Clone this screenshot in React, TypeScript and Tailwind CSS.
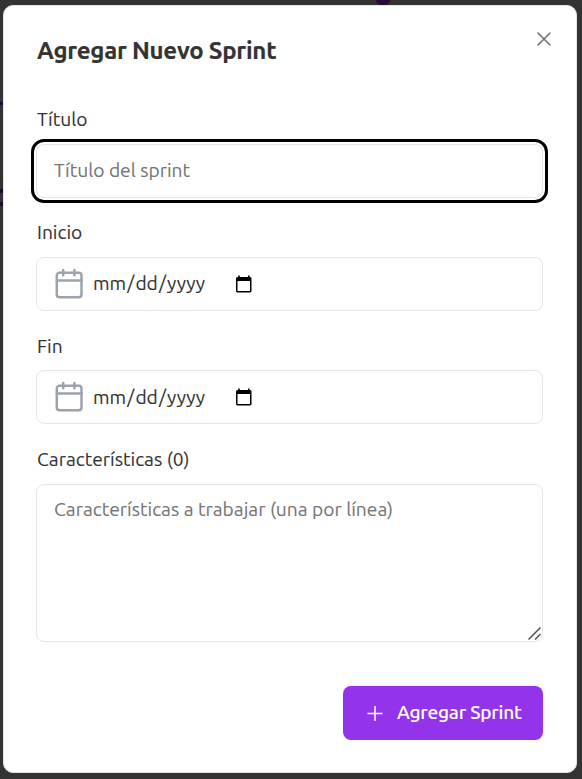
import type { ReactNode } from 'react';

function Label({ children, className = '' }: { children: ReactNode; className?: string }) {
  return (
    <label className={`block h-7 pl-px text-[19.2px] leading-7 whitespace-nowrap ${className}`}>
      {children}
    </label>
  );
}

function CalendarIcon() {
  return (
    <svg className="h-8 w-7 shrink-0" viewBox="0 0 28 32" fill="none" stroke="#9ca3af" strokeWidth="2.5" strokeLinecap="round">
      <rect x="1.8" y="4.8" width="24.7" height="24.5" rx="2.7" />
      <path d="M1.8 12.6H26.5M8.2 2V7.3M19.4 2V7.3" />
    </svg>
  );
}

function PickerIcon() {
  return (
    <svg className="h-[18px] w-4 shrink-0" viewBox="0 0 16 18">
      <path fill="#000" fillRule="evenodd" d="M2.2 .5h1.6v1.5h8.2V.5h1.6v1.5h.6Q15.5 2 15.5 3.5V16Q15.5 17.4 14 17.4H1.5Q0 17.4 0 16V3.5Q0 2 1.6 2h.6ZM1.5 6v10h12.5V6Z" />
    </svg>
  );
}

function DateField({ className = '' }: { className?: string }) {
  return (
    <div className="flex h-[54px] items-center rounded-lg border border-[#e5e5e5] pl-[18px]">
      <CalendarIcon />
      <span className={`ml-[10px] w-[143px] text-[19.2px] whitespace-nowrap ${className}`}>
        mm<span className="px-[1.1px]">/</span>dd<span className="px-[1.1px]">/</span>yyyy
      </span>
      <PickerIcon />
    </div>
  );
}

export default function App() {
  return (
    <div className="relative flex h-[779px] w-[582px] overflow-hidden bg-[#333333] pt-[5px] pl-[3px] font-['Ubuntu','Noto_Sans',sans-serif] text-[#333333] [-webkit-text-stroke:0.1px]">
      <div className="absolute top-[-8px] left-[376px] h-[13px] w-[14px] rounded-[5px] bg-[#2b0b35]" />
      <div className="absolute top-[102px] left-0 h-[3px] w-[3px] bg-[#210936]" />
      <div className="absolute top-[189px] left-0 h-[4px] w-[3px] bg-[#210936]" />
      <div className="absolute top-[202px] left-0 h-[4px] w-[3px] bg-[#210936]" />
      <main className="relative h-[768px] w-[574px] rounded-[10px] border border-[#e5e5e5] bg-white pt-[31px] pr-[33px] pl-[32px]">
        <header className="flex h-[68px] items-start justify-between">
          <h2 className="pl-px text-[24px] leading-7 font-bold tracking-[-0.26px] whitespace-nowrap [-webkit-text-stroke:0.2px]">Agregar Nuevo Sprint</h2>
          <button className="mt-[-5px] mr-[-8px] p-0" aria-label="Cerrar">
            <svg className="size-[14px]" viewBox="0 0 14 14" stroke="#707070" strokeWidth="1.6" strokeLinecap="round">
              <path d="M1 1L13 13M13 1L1 13" />
            </svg>
          </button>
        </header>
        <form>
          <Label>Título</Label>
          <div className="mt-[11px] flex h-[54px] items-center rounded-lg border border-[#e5e5e5] pb-0.5 pl-[17px] text-[19.2px] text-[#757575] outline-3 outline-offset-2 outline-black">
            Título del sprint
          </div>
          <div className="mt-5">
            <Label>Inicio</Label>
            <div className="mt-[11px]"><DateField className="-translate-y-px" /></div>
          </div>
          <div className="mt-5">
            <Label className="translate-y-px">Fin</Label>
            <div className="mt-[11px]"><DateField /></div>
          </div>
          <div className="mt-[21px]">
            <Label>Características (0)</Label>
            <div className="relative mt-[11px] h-[158px] rounded-lg border border-[#e5e5e5] pt-[10px] pl-[17px] text-[19.2px] leading-7 whitespace-nowrap text-[#757575]">
              Características a trabajar (una por línea)
              <svg className="absolute right-[1px] bottom-[1px] size-[13px]" viewBox="0 0 13 13" stroke="#505050" strokeWidth="1.5">
                <path d="M.5 12.5L12.5.5M7 12.5L12.5 7" />
              </svg>
            </div>
          </div>
          <button type="button" className="mt-11 ml-auto flex h-[54px] w-[200px] items-center rounded-lg bg-[#9333ea] pb-px pl-[24px] text-[19.1px] font-medium tracking-[-0.25px] whitespace-nowrap text-white">
            <svg className="mr-[14px] size-4 shrink-0" viewBox="0 0 16 16" stroke="white" strokeWidth="1.5">
              <path d="M.5 8.5H15.5M8 1V16" />
            </svg>
            Agregar Sprint
          </button>
        </form>
      </main>
    </div>
  );
}
